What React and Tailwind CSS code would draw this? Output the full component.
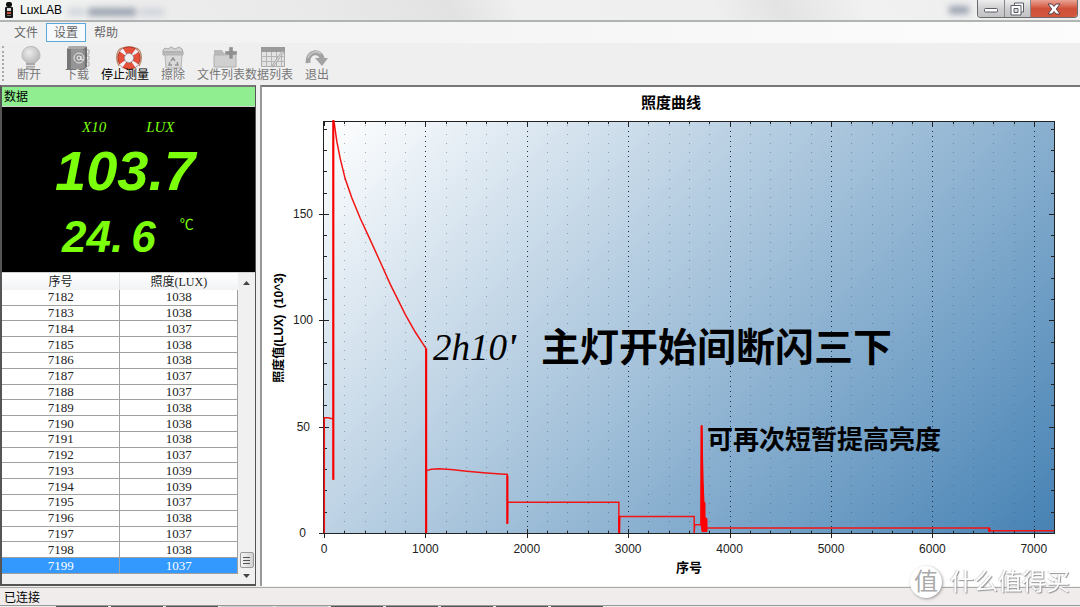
import clsx from "clsx";

const rows = [
  [7182, 1038],
  [7183, 1038],
  [7184, 1037],
  [7185, 1038],
  [7186, 1038],
  [7187, 1037],
  [7188, 1037],
  [7189, 1038],
  [7190, 1038],
  [7191, 1038],
  [7192, 1037],
  [7193, 1039],
  [7194, 1039],
  [7195, 1037],
  [7196, 1038],
  [7197, 1037],
  [7198, 1038],
  [7199, 1037],
];

// [sample number, lux in thousands]
const curve = [
  [3, 0], [3, 54.2], [40, 54.2], [92, 53.6], [92, 25], [92, 194], [100, 193],
  [127, 184], [160, 176], [209, 166.5], [275, 157.5], [357, 148], [456, 137.8],
  [554, 127.5], [653, 117], [801, 102.8], [900, 94.5], [1005, 86.8], [1005, 0],
  [1010, 29.4], [1060, 30], [1130, 30.2], [1250, 29.8], [1409, 29], [1600, 28.2],
  [1780, 27.6], [1807, 27.6], [1807, 4.4], [1810, 14.4], [2908, 14.4], [2908, 0],
  [2916, 7.8], [3651, 7.8], [3651, 0], [3655, 3.9], [3717, 3.9], [3725, 50.5],
  [3740, 1], [3780, 2.3], [6560, 2.3], [6560, 1], [7200, 1],
];

const LEFT = 62;
const RIGHT = 792;
const TOP = 34;
const BOTTOM = 446;
const sx = (v) => LEFT + v * 0.1014;
const sy = (v) => BOTTOM - v * 2.127;

const range = (from, to, step) => {
  const out = [];
  for (let v = from; v <= to; v += step) out.push(v);
  return out;
};

const xTicks = range(0, 7000, 1000);
const xMinor = range(200, 7000, 200).filter((v) => v % 1000 !== 0);
const yTicks = [0, 50, 100, 150];
const yMinor = range(10, 190, 10).filter((v) => v % 50 !== 0);

const DeviceIcon = () => (
  <svg width="10" height="16" viewBox="0 0 10 16" aria-hidden="true">
    <rect x="2" y="0" width="6" height="5" rx="2" fill="#111" />
    <rect x="1" y="5" width="8" height="11" rx="1" fill="#1a1a1a" />
    <rect x="3" y="6" width="4" height="3" fill="#d9d9d9" />
    <rect x="3" y="10" width="4" height="2" fill="#c4512d" />
    <rect x="3" y="13" width="4" height="1" fill="#777" />
  </svg>
);

const BulbIcon = () => (
  <svg width="26" height="24" viewBox="0 0 26 24" aria-hidden="true">
    <defs>
      <radialGradient id="bulb" cx="0.4" cy="0.35" r="0.7">
        <stop offset="0" stopColor="#ececec" />
        <stop offset="1" stopColor="#b4b4b4" />
      </radialGradient>
    </defs>
    <path d="M15 0.500a9 8.500 0 0 0-5 15.500l2 2h6l2-2a9 8.500 0 0 0-5-15.500z" fill="url(#bulb)" stroke="#b9b9b9" />
    <path d="M10 17h9v5l-2 2h-5l-2-2z" fill="#a8a8a8" />
    <path d="M10 19.500h9M10 22h9" stroke="#dcdcdc" />
  </svg>
);

const BookIcon = () => (
  <svg width="26" height="24" viewBox="0 0 26 24" aria-hidden="true">
    <path d="M5 1h18v20l-3 2H3V3z" fill="#6f6f6f" />
    <path d="M3 3h16v20H3z" fill="#959595" />
    <path d="M3 3h4v20H3z" fill="#777" />
    <path d="M5 0h18l-3 3H3z" fill="#a9a9a9" />
    <path d="M20 4v18M23 4h2v4h-2M23 10h2v4h-2M23 16h2v4h-2" stroke="#aaa" fill="none" />
    <circle cx="15" cy="12" r="5" fill="none" stroke="#e6e6e6" />
    <circle cx="15" cy="12" r="2" fill="none" stroke="#f2f2f2" />
    <path d="M17 10v3q1 2 2.500 0" fill="none" stroke="#f2f2f2" />
  </svg>
);

const LifebuoyIcon = () => (
  <svg width="26" height="24" viewBox="0 0 26 24" aria-hidden="true" className="ml-2">
    <path d="M3 20C-1 13 1 5 4 3M23 20c4-7 2-15-1-17M4 3q9-4 18 0" fill="none" stroke="#b98d72" strokeWidth="1.500" />
    <circle cx="13" cy="12" r="8" fill="none" stroke="#a7301f" strokeWidth="7" />
    <circle cx="13" cy="12" r="8" fill="none" stroke="#e4523c" strokeWidth="5.500" />
    <circle cx="13" cy="12" r="8" fill="none" stroke="#eef2fb" strokeWidth="6.500" strokeDasharray="3 9.566" strokeDashoffset="-4.800" />
    <circle cx="13" cy="12" r="4.500" fill="#f0f0f0" stroke="#8d97a8" strokeWidth="0.600" />
  </svg>
);

const BinIcon = () => (
  <svg width="26" height="24" viewBox="0 0 26 24" aria-hidden="true">
    <path d="M3 4l2-2 3 1 3-2 4 2 4-2 3 2 1 3H3z" fill="#d2d2d2" stroke="#aaa" />
    <path d="M3 6h20v3H3z" fill="#bdbdbd" stroke="#a8a8a8" />
    <path d="M5 9h17l-1 13H6z" fill="#dadada" stroke="#b5b5b5" />
    <path d="M11 15l2-3 2 3M17 16l1 3h-3M12 19H9l1-3" fill="none" stroke="#929292" strokeWidth="1.400" />
  </svg>
);

const FolderPlusIcon = () => (
  <svg width="26" height="24" viewBox="0 0 26 24" aria-hidden="true" className="ml-2">
    <path d="M2 6V4h8l2 3h11v14H2z" fill="#b9b9b9" />
    <path d="M2 21V9h22v12z" fill="#d0d0d0" stroke="#b0b0b0" />
    <path d="M17 1h4v4h4v4h-4v4h-4V9h-4V5h4z" fill="#8f8f8f" stroke="#ddd" strokeWidth="0.500" />
  </svg>
);

const GridIcon = () => (
  <svg width="26" height="24" viewBox="0 0 26 24" aria-hidden="true" className="ml-2">
    <path d="M1.500 1.500h23v19h-23z" fill="#e3e3e3" stroke="#a9a9a9" />
    <path d="M1 1h24v5H1z" fill="#9a9a9a" />
    <path d="M1 10.500h24M1 15.500h24M6.500 6v15M11.500 6v15M16.500 6v15M21.500 6v15" stroke="#b4b4b4" />
    <path d="M24 6L14 20l-2 1 1-3L22 5z" fill="#cfcfcf" stroke="#a2a2a2" strokeWidth="0.700" />
  </svg>
);

const ExitIcon = () => (
  <svg width="26" height="24" viewBox="0 0 26 24" aria-hidden="true">
    <path d="M4 17C3 5 17 3 18.500 14" fill="none" stroke="#a2a2a2" strokeWidth="5" />
    <path d="M11 12h13l-6 8z" fill="#a2a2a2" />
    <path d="M4 12C6 6 13 4 17 8" fill="none" stroke="#c6c6c6" strokeWidth="1.500" />
  </svg>
);

const tools = [
  { label: "断开", icon: BulbIcon },
  { label: "下载", icon: BookIcon },
  { label: "停止测量", icon: LifebuoyIcon, active: true },
  { label: "擦除", icon: BinIcon },
  { label: "文件列表", icon: FolderPlusIcon },
  { label: "数据列表", icon: GridIcon },
  { label: "退出", icon: ExitIcon },
];

const TitleBar = () => (
  <header className="flex h-[22px] shrink-0 items-start border-b-2 border-[#b0b4b3] bg-[linear-gradient(60deg,#f4f8f4_0%,#ededed_12%,#e9e9e9_30%,#e2e2e2_42%,#f0f0f0_48%,#efefef_66%,#e3e3e3_72%,#f1f1f1_80%,#ececec_100%)]">
    <div className="flex h-5 flex-1 items-center gap-[6px] pl-1">
      <DeviceIcon />
      <h1 className="text-[12px] text-black">LuxLAB</h1>
      <div className="flex gap-1 pt-1 blur-[3px]" aria-hidden="true">
        <span className="h-2 w-4 bg-gray-300" />
        <span className="h-2 w-12 bg-gray-400" />
        <span className="h-2 w-6 bg-gray-300" />
      </div>
    </div>
    <span className="mt-[6px] mr-2 h-2 w-5 bg-gray-400 blur-[3px]" aria-hidden="true" />
    <div className="mr-[2px] flex h-[18px] overflow-hidden rounded-b border border-t-0 border-[#6b6b6f]">
      <button aria-label="Minimize" className="flex w-[27px] items-center justify-center border-r border-[#88888c] bg-linear-to-b from-[#ededee] via-[#d0d0d2] to-[#c2c2c4]">
        <svg width="15" height="5" viewBox="0 0 15 5" className="mt-1">
          <rect x="0.500" y="0.500" width="13" height="3.500" rx="1" fill="#fff" stroke="#5a5c66" />
        </svg>
      </button>
      <button aria-label="Restore" className="flex w-[26px] items-center justify-center border-r border-[#88888c] bg-linear-to-b from-[#ededee] via-[#d0d0d2] to-[#c2c2c4]">
        <svg width="15" height="14" viewBox="0 0 15 14" fill="none">
          <path d="M4.500 1h9v9h-9z" fill="#fff" stroke="#5a5c66" />
          <path d="M1 3.500h10v9.500H1z" fill="#fff" stroke="#5a5c66" />
          <path d="M4 6.500h4v4H4z" fill="#ddd" stroke="#5a5c66" />
        </svg>
      </button>
      <button aria-label="Close" className="flex w-[46px] items-center justify-center bg-linear-to-b from-[#e9a394] via-[#d0503a] to-[#d4563c]">
        <svg width="14" height="12" viewBox="0 0 14 12">
          <path d="M1 1h4l2 2.500L9 1h4L9.300 6 13 11H9L7 8.500 5 11H1l3.700-5z" fill="#fff" stroke="#56404a" />
        </svg>
      </button>
    </div>
  </header>
);

const MenuBar = () => (
  <nav className="flex h-[21px] shrink-0 items-start bg-linear-to-r from-[#f0f0f0] to-[#fcfcfc] pt-px pl-[6px]">
    {["文件", "设置", "帮助"].map((label) => (
      <button
        key={label}
        className={clsx(
          "h-[19px] w-10 border text-[12px] leading-4 text-[#666]",
          label === "设置" ? "border-[#5ba7dc] bg-[#f7fafc]" : "border-transparent"
        )}
      >
        {label}
      </button>
    ))}
  </nav>
);

const Toolbar = () => (
  <div className="flex h-[42px] shrink-0 bg-[#efefef]">
    <div className="mt-[3px] mb-1 ml-[2px] w-[3px] border-l-2 border-dotted border-[#aaa]" />
    {tools.map(({ label, icon: Icon, active }) => (
      <button
        key={label}
        className={clsx(
          "flex w-12 flex-col items-center pt-[3px] text-[12px] leading-3 whitespace-nowrap",
          active ? "text-black" : "text-[#777]"
        )}
      >
        <Icon />
        <span className="-mt-px">{label}</span>
      </button>
    ))}
  </div>
);

const Meter = () => (
  <div className="h-[167px] shrink-0 border-t border-b border-[#d0d0d0] bg-black text-[#7cff0a]">
    <div className="flex gap-10 pt-3 pl-20 font-['Liberation_Serif',serif] text-[15px] leading-4 italic">
      <span>X10</span>
      <span>LUX</span>
    </div>
    <div className="flex pt-1 pl-[53px] text-[56px] leading-[64px] font-bold italic">
      <span>103.</span>
      <span>7</span>
    </div>
    <div className="flex items-start gap-2 pt-2 pl-[60px] text-[44px] leading-[52px] font-bold italic">
      <span>24.</span>
      <span>6</span>
      <span className="pl-4 font-['Noto_Sans_CJK_SC',sans-serif] text-[14px] leading-6 font-normal not-italic">℃</span>
    </div>
  </div>
);

const DataTable = () => (
  <div className="flex min-h-0 flex-1 bg-[#f0f0f0]">
    <div className="min-h-0 flex-1 pb-[10px]">
      <table className="h-full w-full table-fixed border-collapse text-center font-['Liberation_Serif','Noto_Sans_CJK_SC',serif] text-[13px] leading-3 text-[#222]">
        <thead>
          <tr className="h-[17px] bg-linear-to-b from-white to-[#f1f3f5] text-[12px]">
            <th className="border-r border-[#e0e3e6] font-normal">序号</th>
            <th className="font-normal">照度(LUX)</th>
          </tr>
        </thead>
        <tbody>
          {rows.map(([no, lux]) => (
            <tr key={no} className={no === 7199 ? "bg-[#3399ff] text-white" : "bg-white"}>
              <td className="border-r border-b border-[#a0a0a0]">{no}</td>
              <td className="border-r border-b border-[#a0a0a0]">{lux}</td>
            </tr>
          ))}
        </tbody>
      </table>
    </div>
    <div className="flex w-[17px] flex-col items-center bg-[#f0f0f0]">
      <button aria-label="Scroll up" className="flex h-5 w-full items-center justify-center">
        <svg width="7" height="4" viewBox="0 0 7 4"><path d="M3.500 0L7 4H0z" fill="#444" /></svg>
      </button>
      <div className="flex-1" />
      <div className="flex h-4 w-[14px] flex-col items-center justify-center gap-[2px] rounded-xs border border-[#999] bg-linear-to-r from-[#f5f5f5] to-[#d2d2d4]">
        <span className="h-px w-[7px] bg-[#555]" />
        <span className="h-px w-[7px] bg-[#555]" />
        <span className="h-px w-[7px] bg-[#555]" />
      </div>
      <button aria-label="Scroll down" className="flex h-4 w-full items-center justify-center">
        <svg width="7" height="4" viewBox="0 0 7 4"><path d="M3.500 4L7 0H0z" fill="#444" /></svg>
      </button>
    </div>
  </div>
);

const Chart = () => (
  <svg viewBox="0 0 818 499" className="h-full w-full" role="img" aria-label="照度曲线" fontFamily="'Liberation Sans', 'Noto Sans CJK SC', sans-serif">
    <defs>
      <linearGradient id="plot" gradientUnits="userSpaceOnUse" x1={LEFT} y1={TOP} x2={LEFT + 571} y2={TOP + 571}>
        <stop offset="0" stopColor="#ffffff" />
        <stop offset="1" stopColor="#4682b4" />
      </linearGradient>
    </defs>
    <text x="409" y="21" textAnchor="middle" fontSize="15" fontWeight="bold">照度曲线</text>
    <rect x={LEFT} y={TOP} width={RIGHT - LEFT} height={BOTTOM - TOP} fill="url(#plot)" />

    {/* grid */}
    {xMinor.map((v) => (
      <line key={v} x1={Math.round(sx(v)) + 0.5} x2={Math.round(sx(v)) + 0.5} y1={TOP + 4} y2={BOTTOM} stroke="#26415c" strokeOpacity="0.4" strokeDasharray="1 8" />
    ))}
    {xTicks.slice(1).map((v) => (
      <line key={v} x1={Math.round(sx(v)) + 0.5} x2={Math.round(sx(v)) + 0.5} y1={TOP} y2={BOTTOM} stroke="#1d2f42" strokeDasharray="1 4" />
    ))}

    {/* frame and ticks */}
    <rect x={LEFT - 0.5} y={TOP + 0.5} width={RIGHT - LEFT + 1} height={BOTTOM - TOP} fill="none" stroke="#222" />
    {xMinor.map((v) => (
      <path key={v} d={`M${Math.round(sx(v)) + 0.5} ${TOP}v3M${Math.round(sx(v)) + 0.5} ${BOTTOM}v-2`} stroke="#222" />
    ))}
    {xTicks.map((v) => (
      <g key={v}>
        <path d={`M${Math.round(sx(v)) + 0.5} ${TOP}v5M${Math.round(sx(v)) + 0.5} ${BOTTOM - 4}v9`} stroke="#222" />
        <text x={sx(v)} y="466" textAnchor="middle" fontSize="12" fill="#222">{v}</text>
      </g>
    ))}
    {yMinor.map((v) => (
      <path key={v} d={`M${LEFT} ${Math.round(sy(v)) + 0.5}h3M${RIGHT} ${Math.round(sy(v)) + 0.5}h-3`} stroke="#222" />
    ))}
    {yTicks.map((v) => (
      <g key={v}>
        <path d={`M${LEFT - 5} ${Math.round(sy(v)) + 0.5}h10M${RIGHT} ${Math.round(sy(v)) + 0.5}h-5`} stroke="#222" />
        <text x={v > 99 ? 51 : v ? 48 : 44} y={sy(v) + 4} textAnchor="end" fontSize="12" fill="#222">{v}</text>
      </g>
    ))}

    {/* measured series */}
    <polyline points={curve.map(([x, y]) => `${sx(x)},${sy(y)}`).join(" ")} fill="none" stroke="#f21515" strokeWidth="1.500" />
    <path
      d={`M${sx(92)} ${sy(194)}V${sy(25)}M${sx(1008)} ${sy(86.8)}V${sy(0)}M${sx(1809)} ${sy(27)}V${sy(4.4)}M${sx(2912)} ${sy(7.8)}V${sy(0)}M${sx(6562)} ${sy(2.3)}V${sy(0.5)}`}
      stroke="#f80000"
      strokeWidth="2"
    />
    <path
      d={`M439 ${sy(4)}L439 ${sy(50.5)}h1l1 55 1 22h1v15l2 1v13h-5z`}
      fill="#ff0000"
      stroke="#ff0000"
    />

    <text x="427" y="485" textAnchor="middle" fontSize="13" fontWeight="bold">序号</text>
    <text transform="translate(21 241) rotate(-90)" textAnchor="middle" fontSize="12" fontWeight="bold" className="whitespace-pre">照度值(LUX)  (10^3)</text>

    {/* notes */}
    <text x="171" y="273" fontSize="37" fontStyle="italic" fontFamily="'Liberation Serif', serif">2h10<tspan fontWeight="bold">'</tspan></text>
    <text x="279" y="274" fontSize="39" fontWeight="bold">主灯开始间断闪三下</text>
    <text x="445" y="362" fontSize="26" fontWeight="bold">可再次短暂提高亮度</text>
  </svg>
);

const Watermark = () => (
  <div className="pointer-events-none absolute right-[10px] bottom-[9px] flex items-center gap-2 text-white">
    <span className="flex h-8 w-8 items-center justify-center rounded-full bg-white text-[24px] leading-none text-[#aaa] shadow-[1px_1px_3px_#999]">
      值
    </span>
    <span className="text-[24px] leading-8 whitespace-nowrap opacity-90 [text-shadow:1px_1px_1px_#888,-1px_0_1px_#ccc]">
      什么值得买
    </span>
  </div>
);

const App = () => {
  return (
    <div className="relative flex h-screen flex-col overflow-hidden bg-[#f0f0f0] font-['Liberation_Sans','Noto_Sans_CJK_SC',sans-serif] text-black">
      <TitleBar />
      <MenuBar />
      <Toolbar />

      <main className="flex min-h-0 flex-1 gap-1">
        <aside className="flex w-64 shrink-0 flex-col border-2 border-r border-[#555] border-t-[#777]">
          <h2 className="h-[19px] shrink-0 bg-[#90ee90] pl-[2px] text-[12px] leading-5">数据</h2>
          <Meter />
          <DataTable />
        </aside>
        <section className="min-w-0 flex-1 border-t-2 border-l-2 border-[#777] border-l-[#999] bg-white">
          <Chart />
        </section>
      </main>

      <footer className="mt-px flex h-5 shrink-0 flex-col border-t border-[#aaa] bg-[#f0eceb]">
        <p className="h-[17px] pl-1 text-[12px] leading-[21px]">已连接</p>
        <div className="flex h-[2px] shrink-0 gap-[3px] border-t border-[#999] pl-14">
          {range(1, 10, 1).map((n) => (
            <span key={n} className={clsx("h-px w-[52px]", n > 3 && n < 6 ? "bg-[#ccc]" : "bg-[#555]")} />
          ))}
        </div>
      </footer>
      <Watermark />
    </div>
  );
};

export default App;
